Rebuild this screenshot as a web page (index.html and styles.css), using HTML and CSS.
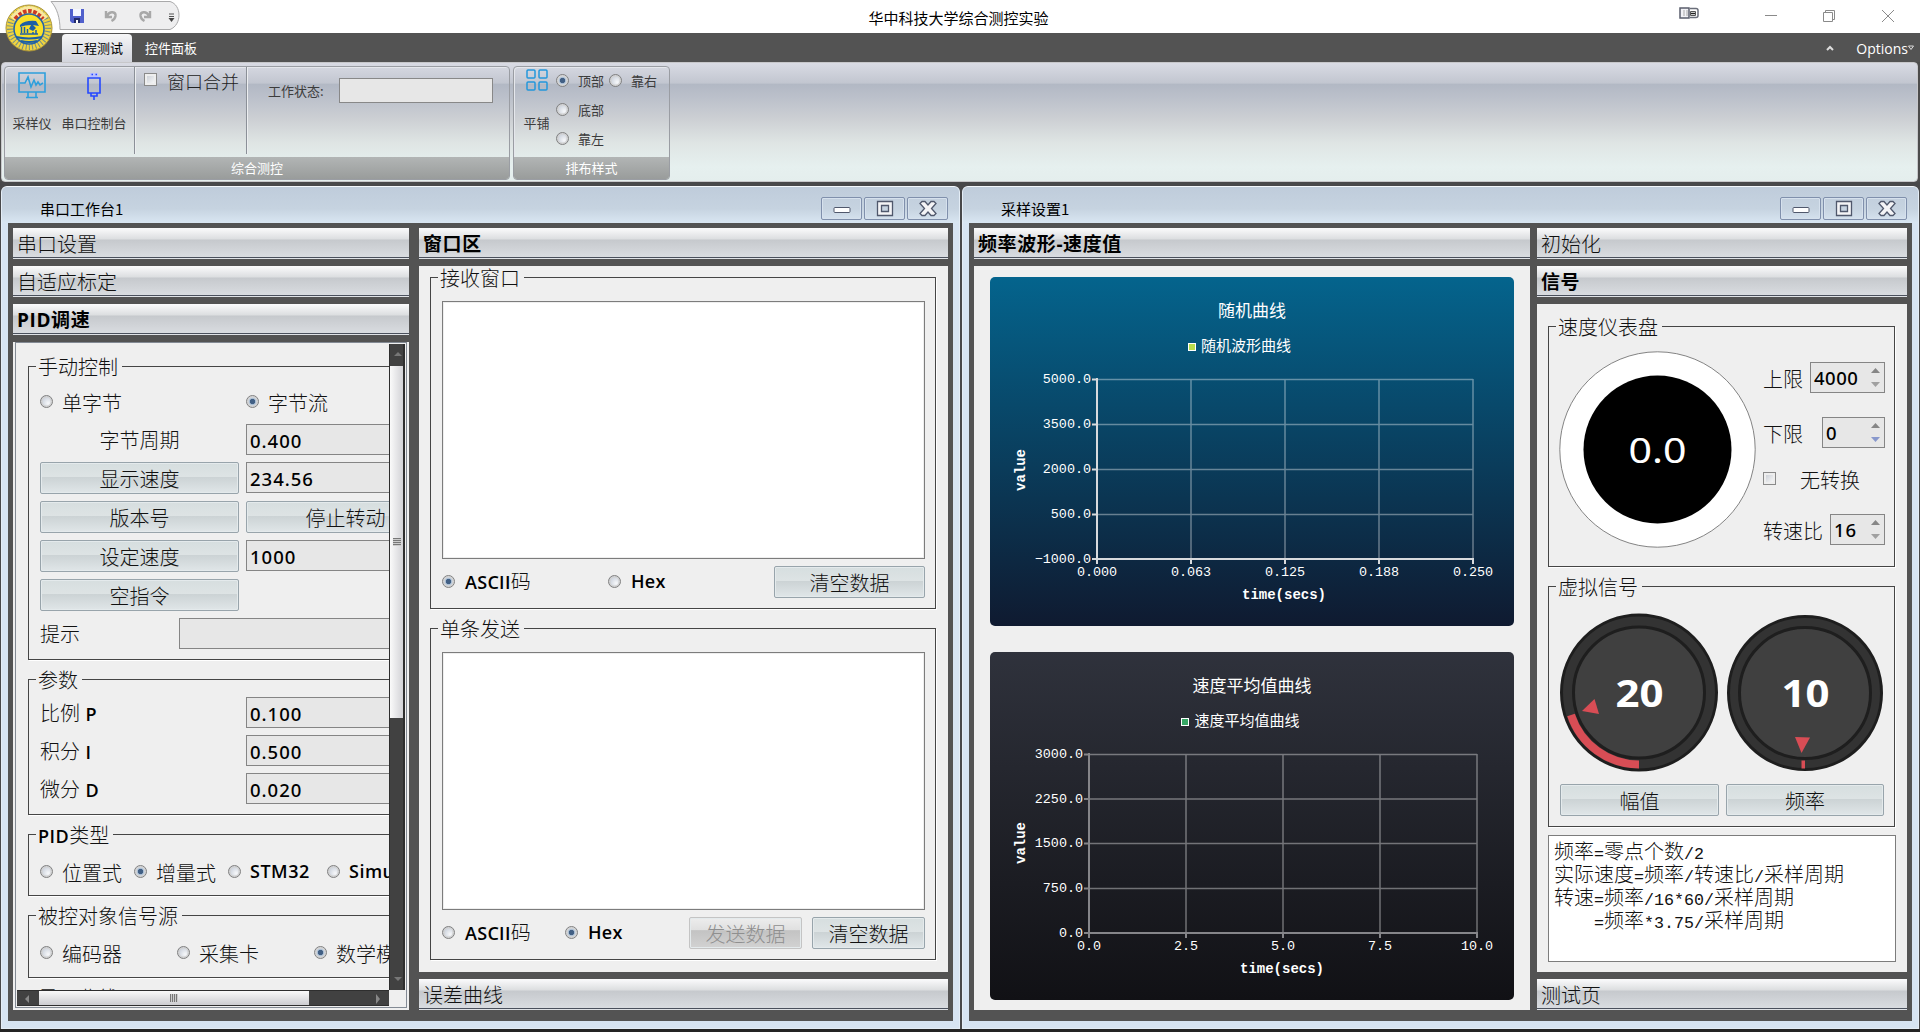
FILE: index.html
```html
<!DOCTYPE html>
<html lang="zh-CN">
<head>
<meta charset="utf-8">
<title>华中科技大学综合测控实验</title>
<link rel="stylesheet" href="styles.css">
</head>
<body>
<header class="titlebar">
  <svg class="quick" width="184" height="33" viewBox="0 0 184 33">
    <path d="M51 1.500H170C182 5 182 25 170 29.500H60C60 18 57 8 51 1.500Z" fill="#eeeeef" stroke="#a9a9aa"/>
    <path d="M70 9h14v14h-12l-2-2z" fill="#5060cc"/><path d="M73 9h8v7h-8z" fill="#f4f6ff"/><path d="M74 18h6v5h-6z" fill="#222b6a"/><path d="M76 20h2v3h-2z" fill="#fff"/>
    <path d="M106 11v6h6M107 16c3-6 9-4 8.500 0-.5 3-2 4-4 5" fill="none" stroke="#a8a8a8" stroke-width="2.400"/>
    <path d="M150 11v6h-6M149 16c-3-6-9-4-8.500 0 .5 3 2 4 4 5" fill="none" stroke="#a8a8a8" stroke-width="2.400"/>
    <path d="M169 14h5M169 16.500h5" stroke="#555"/><path d="M168.500 18h6l-3 4z" fill="#444"/>
  </svg>
  <h1>华中科技大学综合测控实验</h1>
  <svg class="sys" width="220" height="33" viewBox="0 0 220 33" fill="none">
    <path d="M1 8h9v10H1z" fill="#f2f2f6" stroke="#5a5e6c" stroke-width="1.500"/><path d="M5 10v6M8 10v6" stroke="#aaa"/><path d="M11 8.500h6q2 0 2 2v5q0 2-2 2h-6" stroke="#6a6e7a" stroke-width="1.500"/><path d="M11.500 11.500h5v4h-5z" stroke="#555"/><path d="M12 13.500h4" stroke="#222" stroke-width="1.500"/>
    <path d="M86 15.500h12M144.500 12.500h9v9h-9zM146.500 12V10.500h9v9H154M203 10l12 12M215 10l-12 12" stroke="#8a8a8a"/>
  </svg>
</header>
<svg class="orb" width="48" height="48" viewBox="0 0 48 48">
  <circle cx="24" cy="24" r="23" fill="#f0d440" stroke="#a8923a"/>
  <circle cx="24" cy="24" r="19" fill="none" stroke="#4b78a0" stroke-width="6" stroke-dasharray="1 2.200" opacity=".75"/>
  <path d="M8 15Q24-4 40 15" fill="none" stroke="#f8e9a0" stroke-width="7"/>
  <path d="M10 15Q24-1 38 15" fill="none" stroke="#cc3a22" stroke-width="4" stroke-dasharray="3.600 1.600"/>
  <circle cx="24" cy="25" r="15" fill="#f8e02a" stroke="#2463a8" stroke-width="1.600"/>
  <path d="M15 21Q20 16 31 17L34 22L28 21L31 24L28 27L24 25L26 21Q20 21 15 23Z" fill="#1c5fa6"/><path d="M16.500 23v6M19.500 23v6M22.500 25v4M28 28v2M31 26v4M15 30h18" stroke="#1c5fa6" stroke-width="1.500"/>
  <path d="M11 33q13 3 26 0M16 37q8 2 16 0" fill="none" stroke="#1c5fa6" stroke-width="2"/>
</svg>
<nav class="tabs">
  <span class="tab active">工程测试</span><span class="tab">控件面板</span>
  <span class="tabs-right"><svg width="8" height="6" viewBox="0 0 8 6"><path d="M1 5l3-3 3 3" fill="none" stroke="#ddd" stroke-width="2"/></svg><span>Options<svg width="6" height="6" viewBox="0 0 6 6"><path d="M.5 1h5L3 4.500Z" fill="none" stroke="#ddd"/></svg></span></span>
</nav>
<section class="ribbon">
  <div class="rgroup main">
    <div class="rbody">
      <div class="tool t1"><svg width="30" height="30" viewBox="0 0 30 30" fill="none" stroke="#2d9fdc" stroke-width="1.600"><path d="M2 2h26v19H2zM11 21v5M19 21v5M9 26.500h12M3 12h5l3-6 3 10 3-7 2 5 2-3 2 3 3-2"/></svg><span>采样仪</span></div>
      <div class="tool t2"><svg width="30" height="30" viewBox="0 0 30 30" fill="none" stroke="#2448ff" stroke-width="1.600"><path d="M11 2h8v4h-8z" fill="#b9c0ff" stroke="none"/><path d="M12.500 3.500h1.500M16.500 3.500H18M9 7h12v15H9zM12 22v3h6v-3M15 25v4"/></svg><span>串口控制台</span></div>
      <div class="rcell merge"><i class="check"></i><span>窗口合并</span></div>
      <div class="rcell state"><span>工作状态:</span><i class="field"></i></div>
    </div>
    <div class="rlabel">综合测控</div>
  </div>
  <div class="rgroup layout">
    <div class="rbody">
      <div class="tool t3"><svg width="22" height="22" viewBox="0 0 22 22" fill="none" stroke="#2397db" stroke-width="1.500"><rect x="1" y="1" width="8" height="8" rx="1"/><rect x="13" y="1" width="8" height="8" rx="1"/><rect x="1" y="13" width="8" height="8" rx="1"/><rect x="13" y="13" width="8" height="8" rx="1"/></svg><span>平铺</span></div>
      <div class="places"><label><i class="radio on"></i>顶部</label><label><i class="radio"></i>靠右</label><label><i class="radio"></i>底部</label><b></b><label><i class="radio"></i>靠左</label></div>
    </div>
    <div class="rlabel">排布样式</div>
  </div>
</section>

<main class="mdi">
  <section class="win w1">
    <div class="wtitle"><span>串口工作台1</span>
      <div class="wbtns">
        <i><svg width="20" height="18" viewBox="0 0 20 18"><rect x="2" y="7.500" width="16" height="5" rx="1" fill="#fff" stroke="#50586c"/></svg></i>
        <i><svg width="20" height="18" viewBox="0 0 20 18"><path d="M2.500 1.500h15v14h-15zM6.500 5.500v6h7v-6z" fill="#f4f4f6" fill-rule="evenodd" stroke="#50586c" stroke-width="1.300"/></svg></i>
        <i><svg width="20" height="18" viewBox="0 0 20 18"><path d="M2 3.500L4 1.500H7L10 5L13 1.500H16L18 3.500L13.500 8.500L18 13.500L16 15.500H13L10 12L7 15.500H4L2 13.500L6.500 8.500Z" fill="#f4f4f6" stroke="#50586c" stroke-width="1.300"/></svg></i>
      </div></div>
    <div class="wbody">
      <div class="col left">
        <h2 class="bar">串口设置</h2>
        <h2 class="bar">自适应标定</h2>
        <h2 class="bar open">PID调速</h2>
        <div class="scrollpanel"><div class="scrollarea">
          <div class="viewport">
            <fieldset class="manual"><legend>手动控制</legend>
              <div class="mgrid">
                <label><i class="radio"></i><span>单字节</span></label><label><i class="radio on"></i><span>字节流</span></label>
                <span class="mid">字节周期</span><span class="edit">0.400</span>
                <span class="btn">显示速度</span><span class="edit">234.56</span>
                <span class="btn">版本号</span><span class="btn">停止转动</span>
                <span class="btn">设定速度</span><span class="edit">1000</span>
                <span class="btn">空指令</span><b></b>
                <div class="tip"><span>提示</span><span class="edit"></span></div>
              </div>
            </fieldset>
            <fieldset class="params"><legend>参数</legend>
              <div class="pgrid">
                <span>比例 <em>P</em></span><span class="edit">0.100</span>
                <span>积分 <em>I</em></span><span class="edit">0.500</span>
                <span>微分 <em>D</em></span><span class="edit">0.020</span>
              </div>
            </fieldset>
            <fieldset class="kind"><legend><em>PID</em>类型</legend>
              <div class="radios k"><label><i class="radio"></i><span>位置式</span></label><label><i class="radio on"></i><span>增量式</span></label><label><i class="radio"></i><em>STM32</em></label><label><i class="radio"></i><em>Simulink</em></label></div>
            </fieldset>
            <fieldset class="source"><legend>被控对象信号源</legend>
              <div class="radios s"><label><i class="radio"></i><span>编码器</span></label><label><i class="radio"></i><span>采集卡</span></label><label><i class="radio on"></i><span>数学模型</span></label></div>
            </fieldset>
            <fieldset class="more"><legend>显示曲线</legend></fieldset>
          </div>
          <div class="vbar"><svg class="arr" width="16" height="22"><path d="M4 12l4-4 4 4z" fill="#777"/></svg><div class="vthumb"></div><svg class="arr end" width="16" height="22"><path d="M4 9l4 4 4-4z" fill="#777"/></svg></div>
          <div class="hbar"><svg width="22" height="16"><path d="M12 4l-4 4 4 4z" fill="#888"/></svg><div class="hthumb"></div><svg class="end" width="22" height="16"><path d="M9 3l4 5-4 5z" fill="#888"/></svg></div>
          <div class="corner"></div>
        </div></div>
      </div>
      <div class="col middle">
        <h2 class="bar open">窗口区</h2>
        <div class="panel io">
          <fieldset><legend>接收窗口</legend>
            <div class="iobody"><div class="memo"></div>
              <div class="iorow"><label class="c1"><i class="radio on"></i><span><em>ASCII</em>码</span></label><label><i class="radio"></i><em>Hex</em></label><span class="btn wide">清空数据</span></div></div>
          </fieldset>
          <fieldset><legend>单条发送</legend>
            <div class="iobody"><div class="memo"></div>
              <div class="iorow"><label class="c2"><i class="radio"></i><span><em>ASCII</em>码</span></label><label><i class="radio on"></i><em>Hex</em></label><span class="btn off">发送数据</span><span class="btn small">清空数据</span></div></div>
          </fieldset>
        </div>
        <h2 class="bar">误差曲线</h2>
      </div>
    </div>
  </section>

  <section class="win w2">
    <div class="wtitle"><span>采样设置1</span>
      <div class="wbtns">
        <i><svg width="20" height="18" viewBox="0 0 20 18"><rect x="2" y="7.500" width="16" height="5" rx="1" fill="#fff" stroke="#50586c"/></svg></i>
        <i><svg width="20" height="18" viewBox="0 0 20 18"><path d="M2.500 1.500h15v14h-15zM6.500 5.500v6h7v-6z" fill="#f4f4f6" fill-rule="evenodd" stroke="#50586c" stroke-width="1.300"/></svg></i>
        <i><svg width="20" height="18" viewBox="0 0 20 18"><path d="M2 3.500L4 1.500H7L10 5L13 1.500H16L18 3.500L13.500 8.500L18 13.500L16 15.500H13L10 12L7 15.500H4L2 13.500L6.500 8.500Z" fill="#f4f4f6" stroke="#50586c" stroke-width="1.300"/></svg></i>
      </div></div>
    <div class="wbody">
      <div class="col charts">
        <h2 class="bar open">频率波形-速度值</h2>
        <div class="panel plots">
          <svg class="chart blue" width="524" height="349">
            <text class="ct" x="262" y="32">随机曲线</text>
            <rect x="198.500" y="66.500" width="7" height="7" fill="#b9de4d" stroke="#fff"/><text class="cl" x="211" y="67">随机波形曲线</text>
            <path class="grid" d="M107 102.500H483M107 147.500H483M107 192.500H483M107 237.500H483M201 102V282M295 102V282M389 102V282M483 102V282"/>
            <path class="axis" d="M107 101V287M102 282H484M102 102.500h5M102 147.500h5M102 192.500h5M102 237.500h5M201 282v5M295 282v5M389 282v5M483 282v5"/>
            <g class="yl"><text x="101" y="102.500">5000.0</text><text x="101" y="147.500">3500.0</text><text x="101" y="192.500">2000.0</text><text x="101" y="237.500">500.0</text><text x="101" y="282.500">−1000.0</text></g>
            <g class="xl"><text x="107" y="295">0.000</text><text x="201" y="295">0.063</text><text x="295" y="295">0.125</text><text x="389" y="295">0.188</text><text x="483" y="295">0.250</text></g>
            <text class="at" x="294" y="317.500">time(secs)</text><text class="at" transform="translate(31 193) rotate(-90)">value</text>
          </svg>
          <svg class="chart dark" width="524" height="348">
            <text class="ct" x="262" y="32">速度平均值曲线</text>
            <rect x="191.500" y="66.500" width="7" height="7" fill="#37a765" stroke="#fff"/><text class="cl" x="204.500" y="67">速度平均值曲线</text>
            <path class="grid" d="M99 102.500H487M99 147H487M99 191.500H487M99 236.500H487M196 102V281M293 102V281M390 102V281M487 102V281"/>
            <path class="axis" d="M99 101V286M94 281H488M94 102.500h5M94 147h5M94 191.500h5M94 236.500h5M196 281v5M293 281v5M390 281v5M487 281v5"/>
            <g class="yl"><text x="93" y="102.500">3000.0</text><text x="93" y="147">2250.0</text><text x="93" y="191.500">1500.0</text><text x="93" y="236.500">750.0</text><text x="93" y="281">0.0</text></g>
            <g class="xl"><text x="99" y="294">0.0</text><text x="196" y="294">2.5</text><text x="293" y="294">5.0</text><text x="390" y="294">7.5</text><text x="487" y="294">10.0</text></g>
            <text class="at" x="292" y="316.500">time(secs)</text><text class="at" transform="translate(31 191) rotate(-90)">value</text>
          </svg>
        </div>
      </div>
      <div class="col signal">
        <h2 class="bar">初始化</h2>
        <h2 class="bar open">信号</h2>
        <div class="panel sig">
          <fieldset><legend>速度仪表盘</legend>
            <div class="gaugebox">
              <svg width="197" height="197"><circle cx="98.500" cy="98.500" r="97.700" fill="#fff" stroke="#666" stroke-width=".8"/><circle cx="98.500" cy="98.500" r="74" fill="#000"/><text class="gt" x="98.500" y="112" textLength="58" lengthAdjust="spacingAndGlyphs">0.0</text></svg>
              <div class="limits">
                <div><span>上限</span><span class="edit spin s1">4000<svg width="11" height="20"><path d="M1 5l4.500-5L10 5z" fill="#868686"/><path d="M1 14l4.500 5 4.500-5z" fill="#a0a0a0"/></svg></span></div>
                <div><span>下限</span><span class="edit spin s2">0<svg width="11" height="20"><path d="M1 5l4.500-5L10 5z" fill="#868686"/><path d="M1 14l4.500 5 4.500-5z" fill="#8898cc"/></svg></span></div>
                <div class="raw"><i class="check"></i><span>无转换</span></div>
                <div><span>转速比</span><span class="edit spin s3">16<svg width="11" height="20"><path d="M1 5l4.500-5L10 5z" fill="#868686"/><path d="M1 14l4.500 5 4.500-5z" fill="#a0a0a0"/></svg></span></div>
              </div>
            </div>
          </fieldset>
          <fieldset><legend>虚拟信号</legend>
            <div class="dials">
              <svg width="159" height="160" viewBox="0 0 159 160"><circle cx="79" cy="79.500" r="77.500" fill="#333" stroke="#1e1e1e" stroke-width="3"/><circle cx="79" cy="79.500" r="65.500" fill="#404040" stroke="#1e1e1e" stroke-width="3"/><path d="M79 151.500A72 72 0 0 1 11 102" fill="none" stroke="#d84d55" stroke-width="8"/><path d="M22 98L34.500 86L39 101Z" fill="#d84d55"/><text class="dt" x="79.500" y="94" textLength="48" lengthAdjust="spacingAndGlyphs">20</text></svg>
              <svg width="158" height="160" viewBox="0 0 158 160"><circle cx="79" cy="80" r="76.500" fill="#333" stroke="#1e1e1e" stroke-width="3"/><circle cx="79" cy="80" r="65.500" fill="#404040" stroke="#1e1e1e" stroke-width="3"/><path d="M79 151.500H75.500" fill="none" stroke="#d84d55" stroke-width="8"/><path d="M69 124L84 124.500L75.500 140Z" fill="#d84d55"/><text class="dt" x="79.500" y="94" textLength="48" lengthAdjust="spacingAndGlyphs">10</text></svg>
              <span class="btn">幅值</span><span class="btn">频率</span>
            </div>
          </fieldset>
          <div class="memo notes"><p>频率<u>=</u>零点个数<u>/2</u></p><p>实际速度<u>=</u>频率<u>/</u>转速比<u>/</u>采样周期</p><p>转速<u>=</u>频率<u>/16*60/</u>采样周期</p><p><u>&nbsp;&nbsp;&nbsp;&nbsp;=</u>频率<u>*3.75/</u>采样周期</p></div>
        </div>
        <h2 class="bar">测试页</h2>
      </div>
    </div>
  </section>
</main>
</body>
</html>
```
FILE: styles.css
```css
* { box-sizing: border-box; }
body {
  margin: 0; width: 1920px; height: 1032px; overflow: hidden;
  background: #4c4c4c; color: #111;
  font: 300 20px/24px "Noto Sans CJK SC", sans-serif;
  display: flex; flex-direction: column;
}
h1, h2, p, fieldset, legend { margin: 0; padding: 0; font-weight: inherit; }
i, em, u { font-style: normal; text-decoration: none; }
svg { display: block; flex: none; }
em { font-family: "Open Sans", sans-serif; font-weight: 600; font-size: 18px; letter-spacing: .5px; color: #000; }
span, label { white-space: nowrap; }

/* title bar, quick access, tabs */
.titlebar { height: 33px; background: #fff; display: grid; grid-template-columns: 1fr auto 1fr; flex: none; }
.titlebar h1 { font-size: 15px; line-height: 35px; color: #000; font-weight: 400; margin-left: -3px; }
.sys { justify-self: end; margin-right: 21px; }
.orb { position: absolute; left: 5px; top: 4px; }
.tabs { height: 29px; background: #535353; padding: 1px 6px 0 62px; display: flex; flex: none; color: #fff; font-size: 13px; font-weight: 400; }
.tab { width: 70px; line-height: 28px; text-align: center; margin-right: 4px; }
.tab.active { color: #000; background: linear-gradient(#f6f6f7, #d2d4dc); border-radius: 4px 4px 0 0; }
.tabs-right { margin-left: auto; display: flex; align-items: center; gap: 22px; font: 14px "Open Sans", sans-serif; }
.tabs-right span { display: flex; align-items: center; }

/* ribbon */
.ribbon {
  height: 120px; margin: 0 2px 0 1px; padding: 3px 3px 1px; flex: none;
  display: flex; gap: 3px; border: 1px solid #c7c7ca; border-radius: 4px;
  background: linear-gradient(#d9dbe4 0, #c2c6d0 17%, #b2b8c4 18%, #bcc1cb 30%, #cdd0d4 48%, #dfe5e4 68%, #e6f0ef 88%, #e4eeed);
}
.rgroup { border: 1px solid #9a9da3; border-radius: 4px; display: flex; flex-direction: column; overflow: hidden; box-shadow: inset 1px 1px #e5e7ec; font-size: 13px; font-weight: 400; color: #3c3c3c; }
.main { width: 506px; margin-left: -1px; }
.layout { width: 157px; }
.rlabel { height: 22px; line-height: 21px; text-align: center; color: #fff; background: linear-gradient(#b2b5b5, #999c9b); }
.rbody { flex: 1; display: flex; }
.tool { display: flex; flex-direction: column; align-items: center; padding-top: 4px; }
.tool span { margin-top: 12px; line-height: 20px; }
.t1 { width: 54px; } .t2 { width: 70px; }
.rcell { border-left: 1px solid #8b9098; box-shadow: inset 1px 0 #eceef0; height: 87px; display: flex; }
.merge { width: 112px; margin-left: 5px; padding: 2px 0 0 9px; gap: 10px; font-size: 18px; font-weight: 300; color: #222; }
.merge .check { margin-top: 4px; }
.state { padding: 11px 0 0 21px; line-height: 26px; }
.field { width: 154px; height: 25px; margin-left: 15px; border: 1px solid #888; background: #e7e7e7; }
.check { width: 13px; height: 13px; border: 1px solid #8a8a8a; background: linear-gradient(135deg, #c4c8d0, #fff); box-shadow: inset 0 0 0 2px #eee; flex: none; }
.t3 { width: 43px; padding: 2px 0 0 7px; } .t3 span { margin-top: 22px; }
.places { display: grid; grid-template-columns: 53px 60px; grid-template-rows: 29px 29px 29px; padding: 0 0 0 4px; margin-top: -1px; }
.places label { gap: 9px; font-size: 13px; }
label { display: flex; align-items: center; gap: 9px; }
.radios span, .mgrid label span { margin-top: 3px; }
.radio { width: 13px; height: 13px; flex: none; border-radius: 50%; border: 1px solid #808080; background: radial-gradient(circle at 65% 65%, #f7f8fa, #b6bfcd); box-shadow: inset 0 0 0 1.500px #d2d2d2; }
.radio.on { background: radial-gradient(circle, #426085 0 2.300px, #a9bdd2 3px, #e4e8ee 5px); }

/* windows */
.mdi { display: flex; gap: 2px; padding: 4px 1px 0; height: 850px; border-bottom: 3px solid #242424; background: #48484a; }
.win { height: 843px; background: #d7e4f2; border: 1px solid #e4edf6; border-top-color: #f3f7fb; border-radius: 6px 6px 0 0; padding: 0 6px 6px; }
.w1 { width: 959px; } .w2 { width: 957px; }
.wtitle { height: 36px; margin: 0 -6px; padding: 10px 11px 0 38px; display: flex; justify-content: space-between; background: linear-gradient(#bfccdb, #c6d3e0 60%, #d9e6f2); border-radius: 5px 5px 0 0; font-size: 15px; line-height: 24px; font-weight: 400; color: #000; }
.wbtns { display: flex; gap: 2px; }
.wbtns i { width: 41px; height: 23px; border: 1px solid #8090ac; border-radius: 2px; box-shadow: inset 0 0 0 1px #d6e1ed; display: flex; align-items: center; justify-content: center; }
.wbody { height: 798px; background: #535353; padding: 5px 5px 11px; display: flex; }
.w1 .wbody { gap: 10px; } .w2 .wbody { gap: 7px; }
.col { display: grid; row-gap: 7px; }
.left { width: 396px; grid-template-rows: 31px 31px 31px 1fr; }
.middle { width: 529px; grid-template-rows: 31px 1fr 31px; }
.charts { width: 556px; grid-template-rows: 31px 1fr; }
.signal { width: 370px; grid-template-rows: 31px 31px 1fr 31px; }
.bar { height: 31px; padding-left: 4px; font-size: 20px; line-height: 31px; background: linear-gradient(#fbfbfc 0, #dcdee0 11px, #c6c9cd 12px, #d9dce0 29px, #4a505c 29px 30px, #dfe2e6 30px); }
.bar.open { font-weight: 700; font-size: 19px; line-height: 32px; letter-spacing: .6px; color: #000; font-family: "Open Sans", "Noto Sans CJK SC", sans-serif; }
.panel, .scrollpanel { background: #efefef; min-height: 0; }
fieldset { border: 1px solid #454545; padding: 0 7px; min-width: 0; box-shadow: 1px 1px #fff; }
legend { height: 24px; padding: 0 4px 0 2px; line-height: 26px; white-space: nowrap; }
.edit { border: 1px solid #858585; background: #e7e7e7; height: 31px; padding-left: 3px; font: 500 18.500px/31px "Noto Sans", sans-serif; letter-spacing: 1px; color: #000; }
.btn { height: 32px; border: 1px solid #98a4ab; border-radius: 2px; text-align: center; line-height: 32px; background: linear-gradient(#d6dedf 0, #dde3e4 45%, #ccd3d5 48%, #e0e6e8 100%); box-shadow: inset 0 0 0 1px #e4eaec; }
.btn.off { color: #8f8f8f; border-color: #c4c4c4; background: linear-gradient(#ededed, #e0e0e0 40%, #c3c3c3 42%, #d2d2d2); }
.memo { background: #fff; border: 1px solid #7c7c7c; }

/* scrolled settings */
.scrollpanel { padding: 0 2px 2px; }
.scrollarea { height: 100%; border: 1px solid #838a94; padding: 1px; display: grid; grid-template: 1fr 16px / 372px 16px; overflow: hidden; }
.viewport { overflow: hidden; height: 646px; padding: 10px 0 0 11px; display: flex; flex-direction: column; gap: 7px; }
.viewport fieldset { width: 429px; flex: none; }
.manual { height: 306px; } .params { height: 148px; } .kind { height: 74px; } .source, .more { height: 75px; }
.mgrid { margin: 7px 0 0 4px; display: grid; grid-template-columns: 199px 199px; grid-template-rows: 32px 31px repeat(4, 32px) 31px; gap: 7px; }
.mid { text-align: center; line-height: 31px; }
.tip { grid-column: 1 / 3; display: grid; grid-template-columns: 139px 1fr; line-height: 31px; }
.pgrid { margin: 6px 0 0 4px; display: grid; grid-template-columns: 206px 199px; grid-auto-rows: 31px; row-gap: 7px; line-height: 31px; }
.pgrid em { margin-left: 1px; }
.radios { display: grid; margin-left: 4px; height: 50px; }
.k { grid-template-columns: 94px 94px 99px 110px; }
.s { grid-template-columns: 137px 137px 137px; }
.vbar { background: #414141; display: flex; flex-direction: column; border-right: 2px solid #2e2e2e; border-left: 1px solid #2e2e2e; }
.vthumb { height: 352px; background: linear-gradient(90deg, #fafafa, #d2d2d6); display: flex; align-items: center; justify-content: center; }
.vthumb::after { content: ""; width: 8px; height: 8px; background: repeating-linear-gradient(#777 0 1px, #ccc 1px 2px); }
.end { margin-top: auto; }
.hbar { background: #414141; display: flex; border-top: 1px solid #2e2e2e; border-bottom: 1px solid #2e2e2e; }
.hbar .end { margin: 0 0 0 auto; }
.hthumb { width: 270px; background: linear-gradient(#fafafa, #ccccd0); display: flex; align-items: center; justify-content: center; }
.hthumb::after { content: ""; width: 8px; height: 8px; background: repeating-linear-gradient(90deg, #777 0 1px, #ccc 1px 2px); }

/* receive / send */
.io { padding: 0 11px; display: flex; flex-direction: column; gap: 7px; }
.io fieldset { height: 344px; width: 506px; flex: none; }
.io fieldset:first-child { margin-top: -1px; }
.iobody { margin: 12px 0 0 4px; width: 483px; }
.io .memo { height: 258px; box-shadow: inset 0 0 0 1px #eee; }
.iorow { display: flex; margin-top: 7px; height: 32px; }
.iorow label { height: 30px; gap: 10px; }
.iorow em { font-size: 18px; letter-spacing: .3px; }
.c1 { width: 166px; } .c2 { width: 123px; }
.wide { width: 151px; margin-left: auto; } .off { width: 113px; margin-left: auto; } .small { width: 113px; margin-left: 10px; }

/* charts */
.plots { padding: 11px 16px; display: flex; flex-direction: column; gap: 26px; }
.chart { border-radius: 5px; fill: #fff; }
.blue { background: linear-gradient(#04648d, #0f1a30); }
.dark { background: linear-gradient(#2f323c, #111115); }
.chart text { dominant-baseline: central; }
.ct { font-size: 17px; font-weight: 400; text-anchor: middle; }
.cl { font-size: 15px; font-weight: 400; }
.yl, .xl { font: 13.400px "Liberation Mono", monospace; }
.yl { text-anchor: end; } .xl { text-anchor: middle; }
.at { font: 700 14px "Liberation Mono", monospace; text-anchor: middle; }
.grid { stroke: #fff; stroke-opacity: .38; stroke-width: 1.500; fill: none; }
.axis { stroke: #d8dadd; stroke-width: 2; fill: none; }
.dark .axis { stroke: #858589; }

/* signal column */
.sig { padding: 10px 0 0 11px; }
.sig fieldset { width: 347px; height: 253px; margin-bottom: 7px; }
.gaugebox { display: flex; margin: 0 0 0 3px; }
.gaugebox > svg { margin-top: 13px; }
.gt, .dt { font: 35px "Noto Sans", sans-serif; fill: #fff; text-anchor: middle; }
.dt { font-weight: 700; font-size: 37px; }
.limits { width: 122px; margin: 24px 0 0 7px; display: grid; grid-template-rows: 55px 46px 51px 31px; line-height: 33px; }
.limits div { display: flex; justify-content: space-between; }
.spin { display: flex; align-items: center; justify-content: space-between; padding-right: 3px; }
.s1 { width: 75px; letter-spacing: .5px; } .s2 { width: 63px; } .s3 { width: 55px; }
.limits .raw { justify-content: flex-start; gap: 24px; line-height: 34px; }
.raw .check { margin-top: 9px; }
.dials { margin: 15px 0 0 4px; display: grid; grid-template: 171px 32px / 159px 158px; column-gap: 7px; }
.notes { width: 348px; height: 127px; margin-top: 8px; padding: 3px 5px; line-height: 23px; white-space: nowrap; overflow: hidden; }
.notes p { height: 23px; }
.notes u { font-family: "Liberation Mono", monospace; font-size: 16.670px; line-height: 18px; }
```
